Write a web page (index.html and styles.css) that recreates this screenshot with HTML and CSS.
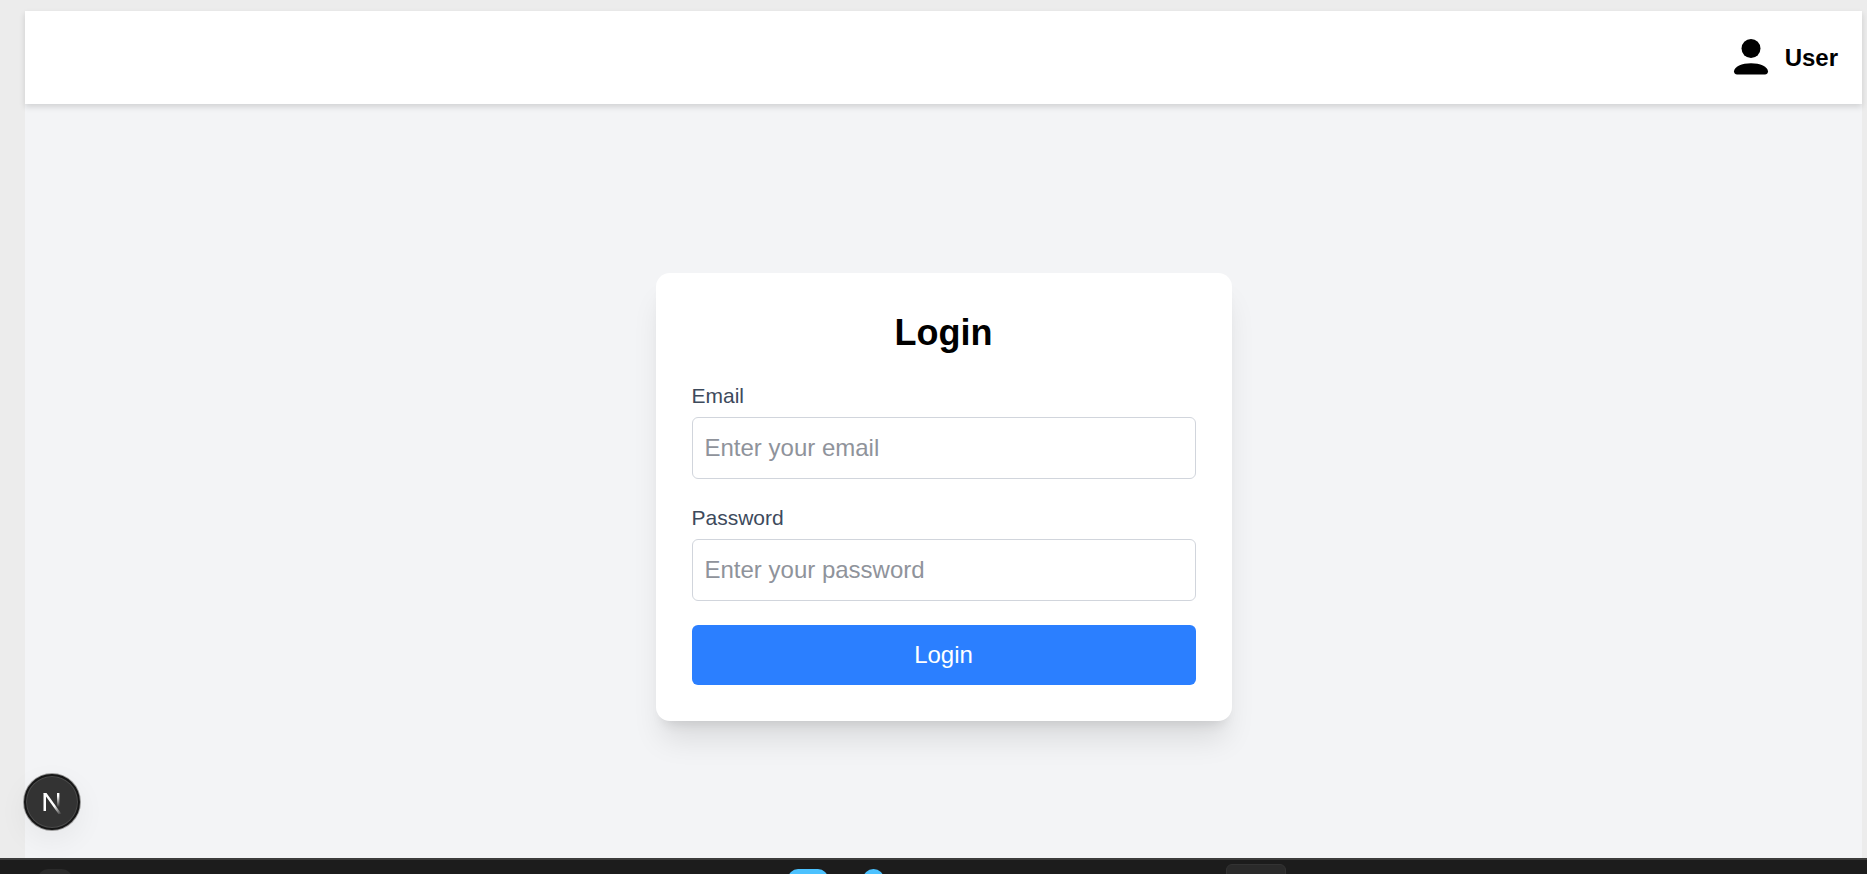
FILE: index.html
```html
<!DOCTYPE html>
<html lang="en">
<head>
<meta charset="utf-8">
<title>Login</title>
<link rel="stylesheet" href="styles.css">
</head>
<body>
<div class="shell">
  <div class="app">
    <header class="topbar">
      <div class="user">
        <svg class="user-icon" viewBox="0 1.500 36 36" aria-hidden="true"><circle cx="18" cy="10" r="9.500" fill="#000"/><path d="M1 33c0-5 8-8.300 17-8.300S35 28 35 33c0 2-1.500 3-3 3H4c-1.500 0-3-1-3-3z" fill="#000"/></svg>
        <span class="user-name">User</span>
      </div>
    </header>
    <main class="main">
      <form class="card">
        <h1 class="title">Login</h1>
        <div class="field">
          <label class="label" for="email">Email</label>
          <input class="input" id="email" type="email" placeholder="Enter your email">
        </div>
        <div class="field">
          <label class="label" for="password">Password</label>
          <input class="input" id="password" type="password" placeholder="Enter your password">
        </div>
        <button class="submit" type="button">Login</button>
      </form>
    </main>
  </div>
</div>
<footer class="taskbar">
  <span class="tb tb-left"></span>
  <span class="tb tb-blue"></span>
  <span class="tb tb-dot"></span>
  <span class="tb tb-box"></span>
</footer>
<button class="devbadge" type="button" aria-label="Next.js dev tools">
  <svg viewBox="0 0 24 24" width="24" height="24" aria-hidden="true">
    <defs>
      <linearGradient id="ng" x1="0" y1="0" x2="1" y2="1"><stop offset="0.6" stop-color="#fff"/><stop offset="1" stop-color="#fff" stop-opacity="0"/></linearGradient>
      <linearGradient id="ns" x1="0" y1="0" x2="0" y2="1"><stop offset="0.2" stop-color="#fff"/><stop offset="1" stop-color="#fff" stop-opacity="0"/></linearGradient>
    </defs>
    <path d="M3.500 3h2.500v18H3.500z" fill="#fff"/>
    <path d="M3.500 3h3L21.500 24h-3z" fill="url(#ng)"/>
    <path d="M17 3h2.400v14H17z" fill="url(#ns)"/>
  </svg>
</button>
</body>
</html>
```

FILE: styles.css
```css
* { box-sizing: border-box; }
html, body { margin: 0; height: 100%; overflow: hidden; }
body {
  display: flex;
  flex-direction: column;
  height: 874px;
  background: #ececec;
  font-family: "Liberation Sans", Arial, sans-serif;
}
.shell {
  flex: 1;
  min-height: 0;
  padding: 11px 5px 0 25px;
}
.app {
  height: 100%;
  display: flex;
  flex-direction: column;
  background: #f3f4f6;
}
.topbar {
  height: 93px;
  flex: none;
  display: flex;
  align-items: center;
  justify-content: flex-end;
  padding-right: 24px;
  background: #fff;
  box-shadow: 0 3px 6px rgba(0, 0, 0, 0.14);
}
.user { display: flex; align-items: center; gap: 16px; }
.user-icon { width: 36px; height: 36px; display: block; overflow: visible; }
.user-name { font-size: 24px; font-weight: 700; color: #000; }
.main {
  flex: 1;
  min-height: 0;
  display: flex;
  justify-content: center;
  padding-top: 169px;
}
.card {
  width: 576px;
  height: 448px;
  padding: 36px;
  background: #fff;
  border-radius: 14px;
  box-shadow: 0 24px 30px -6px rgba(0, 0, 0, 0.1), 0 10px 12px -7px rgba(0, 0, 0, 0.1);
}
.title {
  margin: 0 0 24px;
  font-size: 36px;
  line-height: 48px;
  font-weight: 700;
  text-align: center;
  color: #000;
}
.field { margin-bottom: 24px; }
.label {
  display: block;
  margin-bottom: 7px;
  font-size: 21px;
  line-height: 29px;
  color: #3d4a5c;
}
.input {
  display: block;
  width: 100%;
  height: 62px;
  padding: 0 12px;
  border: 1.2px solid #d1d5dc;
  border-radius: 6px;
  background: #fff;
  font: 24px "Liberation Sans", Arial, sans-serif;
  outline: none;
}
.input::placeholder { color: #8f939b; opacity: 1; }
.submit {
  display: block;
  width: 100%;
  height: 60px;
  border: 0;
  border-radius: 6px;
  background: #2b7fff;
  color: #fff;
  font: 24px "Liberation Sans", Arial, sans-serif;
}
.taskbar {
  flex: none;
  height: 16px;
  position: relative;
  overflow: hidden;
  display: flex;
  align-items: flex-start;
  background: #1c1c1c;
  border-top: 2px solid #3c3c3c;
}
.tb { flex: none; display: block; }
.tb-left { width: 34px; height: 20px; margin: 9px 0 0 38px; border-radius: 14px; background: #2a2a2a; }
.tb-blue { width: 40px; height: 20px; margin: 9px 0 0 716px; border-radius: 10px; background: #4cc2ff; }
.tb-dot { width: 21px; height: 21px; margin: 9px 0 0 35px; border-radius: 50%; background: #4cc2ff; }
.tb-box { width: 60px; height: 24px; margin: 4px 0 0 342px; border-radius: 6px; background: #2a2a2a; border: 1px solid #333; }
.devbadge {
  position: fixed;
  left: 24px;
  top: 774px;
  width: 56px;
  height: 56px;
  padding: 0;
  display: flex;
  align-items: center;
  justify-content: center;
  border-radius: 50%;
  background: #333;
  border: 2px solid #161616;
  box-shadow: 0 0 0 1px #999, inset 0 0 0 1px #4a4a4a, 0 10px 30px rgba(0, 0, 0, 0.06);
}
```
